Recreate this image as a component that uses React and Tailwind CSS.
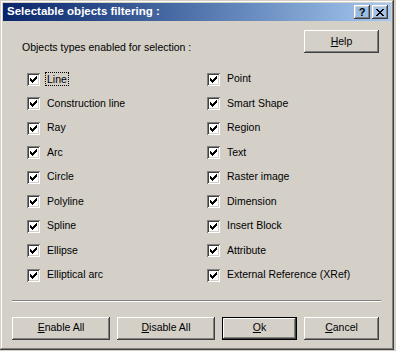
import React from "react";

const raised =
  "shadow-[inset_-1px_-1px_#404040,inset_1px_1px_#ffffff,inset_-2px_-2px_#808080,inset_2px_2px_#d4d0c8]";

function Check() {
  return (
    <span className="relative w-[13px] h-[13px] flex-none bg-white shadow-[inset_1px_1px_#808080,inset_-1px_-1px_#ffffff,inset_2px_2px_#404040,inset_-2px_-2px_#d4d0c8]">
      <svg
        width="13"
        height="13"
        viewBox="0 0 13 13"
        className="absolute left-0 top-0"
        shapeRendering="crispEdges"
      >
        <g fill="#000">
          <rect x="9" y="3" width="1" height="1" />
          <rect x="8" y="4" width="2" height="1" />
          <rect x="3" y="5" width="1" height="1" />
          <rect x="7" y="5" width="3" height="1" />
          <rect x="3" y="6" width="2" height="1" />
          <rect x="6" y="6" width="3" height="1" />
          <rect x="3" y="7" width="5" height="1" />
          <rect x="4" y="8" width="3" height="1" />
          <rect x="5" y="9" width="1" height="1" />
        </g>
      </svg>
    </span>
  );
}

function Item({ label, focus }) {
  return (
    <div className="h-[24.5px] flex items-center gap-[5px]">
      <Check />
      {focus ? (
        <span className="px-[1px] leading-[12px] border border-dotted border-black">
          {label}
        </span>
      ) : (
        <span className="pl-[2px]">{label}</span>
      )}
    </div>
  );
}

function Btn({ w, children, def }) {
  if (def) {
    return (
      <div className={`${w} h-[23px] border border-black`}>
        <div
          className={`w-full h-full flex items-center justify-center ${raised}`}
        >
          {children}
        </div>
      </div>
    );
  }
  return (
    <div className={`${w} h-[23px] flex items-center justify-center ${raised}`}>
      {children}
    </div>
  );
}

const left = [
  "Line",
  "Construction line",
  "Ray",
  "Arc",
  "Circle",
  "Polyline",
  "Spline",
  "Ellipse",
  "Elliptical arc",
];
const right = [
  "Point",
  "Smart Shape",
  "Region",
  "Text",
  "Raster image",
  "Dimension",
  "Insert Block",
  "Attribute",
  "External Reference (XRef)",
];

export default function App() {
  return (
    <div className="w-[396px] h-[351px] bg-[#d4d0c8] text-black text-[10.5px] font-['Liberation_Sans',Arial,sans-serif]">
      <div className="w-[394px] h-[350px] p-[3px] flex flex-col shadow-[inset_-1px_-1px_#404040,inset_1px_1px_#d4d0c8,inset_-2px_-2px_#808080,inset_2px_2px_#ffffff]">
        {/* Title bar */}
        <div className="h-[18px] flex items-center justify-between pl-[4px] pr-[3px] bg-gradient-to-r from-[#0a246a] to-[#a6caf0]">
          <span className="text-white font-bold text-[11.5px] leading-none">
            Selectable objects filtering :
          </span>
          <div className="flex gap-[2px]">
            <div
              className={`w-[16px] h-[14px] flex items-center justify-center font-bold text-[11px] leading-none ${raised}`}
            >
              ?
            </div>
            <div
              className={`w-[16px] h-[14px] flex items-center justify-center ${raised}`}
            >
              <svg width="8" height="7" viewBox="0 0 8 7" shapeRendering="crispEdges">
                <g fill="#000">
                  <rect x="0" y="0" width="2" height="1" />
                  <rect x="6" y="0" width="2" height="1" />
                  <rect x="1" y="1" width="2" height="1" />
                  <rect x="5" y="1" width="2" height="1" />
                  <rect x="2" y="2" width="4" height="1" />
                  <rect x="3" y="3" width="2" height="1" />
                  <rect x="2" y="4" width="4" height="1" />
                  <rect x="1" y="5" width="2" height="1" />
                  <rect x="5" y="5" width="2" height="1" />
                  <rect x="0" y="6" width="2" height="1" />
                  <rect x="6" y="6" width="2" height="1" />
                </g>
              </svg>
            </div>
          </div>
        </div>

        {/* Header row */}
        <div className="flex justify-between mt-[9px] pl-[19px] pr-[12px]">
          <span className="pt-[11px] leading-[13px]">
            Objects types enabled for selection :
          </span>
          <Btn w="w-[75px]">
            <span>
              <span className="underline">H</span>elp
            </span>
          </Btn>
        </div>

        {/* Checkbox grid */}
        <div className="mt-[13px] pl-[24px] grid grid-cols-[180px_1fr]">
          <div className="flex flex-col">
            {left.map((l, i) => (
              <Item key={l} label={l} focus={i === 0} />
            ))}
          </div>
          <div className="flex flex-col">
            {right.map((l) => (
              <Item key={l} label={l} />
            ))}
          </div>
        </div>

        {/* Separator */}
        <div className="mt-[12px] ml-[9px] w-[369px] h-[2px] border-t border-t-[#808080] border-b border-b-white" />

        {/* Buttons */}
        <div className="mt-[15px] pl-[9px] flex gap-[7px]">
          <Btn w="w-[98px]">
            <span>
              <span className="underline">E</span>nable All
            </span>
          </Btn>
          <Btn w="w-[98px]">
            <span>
              <span className="underline">D</span>isable All
            </span>
          </Btn>
          <Btn w="w-[75px]" def>
            <span>
              <span className="underline">O</span>k
            </span>
          </Btn>
          <Btn w="w-[75px]">
            <span>
              <span className="underline">C</span>ancel
            </span>
          </Btn>
        </div>
      </div>
    </div>
  );
}
